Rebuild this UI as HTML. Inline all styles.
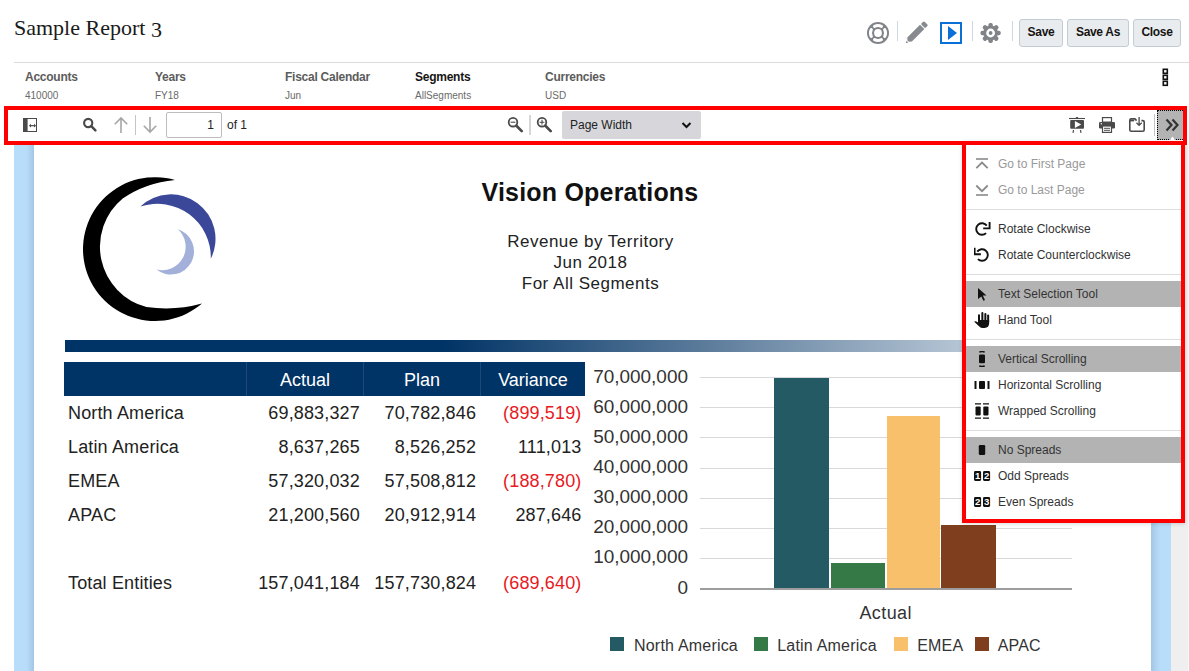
<!DOCTYPE html>
<html><head><meta charset="utf-8">
<style>
*{box-sizing:border-box;}
html,body{margin:0;padding:0;}
body{width:1189px;height:671px;overflow:hidden;position:relative;background:#fff;font-family:"Liberation Sans",sans-serif;color:#000;}
.a{position:absolute;white-space:nowrap;}
.title{left:14px;top:12.7px;font-family:"Liberation Serif",serif;font-size:22px;line-height:30px;color:#1a1a1a;}
.sep{width:1px;background:#cfd8e2;}
.btn{top:19px;height:28px;border:1px solid #c3ccd5;border-radius:3px;background:#e9ecef;font-weight:bold;font-size:12px;line-height:25px;letter-spacing:-0.3px;text-align:center;color:#161513;}
.hline{left:14px;top:62px;width:1175px;height:1px;background:#dcdcdc;}
.dl{font-weight:bold;font-size:12px;line-height:14px;letter-spacing:-0.25px;color:#5c5c5c;top:69.6px;}
.dv{font-size:10px;line-height:12px;color:#6a6a6a;top:89.5px;}
/* toolbar */
.tb{left:4px;top:106px;width:1183px;height:39px;border:4px solid #f00;background:#fff;}
.panelL{left:14px;top:145px;width:20px;height:526px;background:linear-gradient(to right,#b8ddfa 0,#b8ddfa 62%,#a4c6e6 100%);}
.panelR{left:1151px;top:145px;width:20px;height:526px;background:linear-gradient(to right,#a4c6e6 0,#b8ddfa 45%,#b8ddfa 100%);}
.gray{left:1171px;top:145px;width:18px;height:526px;background:#efefef;}
.tsep{width:1px;background:#c4c4c4;}
.menu{left:962px;top:141px;width:223px;height:382px;border:4px solid #f00;background:#fff;box-shadow:0 1px 4px rgba(0,0,0,.15);}
.mi{position:absolute;left:0;width:215px;height:26px;font-size:12px;line-height:26px;color:#333;}
.mi span{position:absolute;left:32px;top:0;}
.mi svg{position:absolute;left:8px;top:5px;}
.mi.hl{background:#b3b3b3;}
.mi.dis{color:#999;}
.msep{position:absolute;left:0;width:215px;height:1px;background:#ddd;}
.rt{font-size:17px;line-height:21.2px;letter-spacing:0.5px;color:#222;text-align:center;}
.th{position:absolute;top:361.5px;height:34px;background:#003366;}
.thc{color:#fff;font-size:18px;line-height:36px;text-align:center;}
.cell{font-size:18px;line-height:20px;letter-spacing:0.15px;color:#222;}
.neg{color:#e8191e;}
.yl{font-size:18px;line-height:20px;color:#333;text-align:right;width:100px;transform:scaleX(1.053);transform-origin:100% 50%;}
.grid{position:absolute;left:700px;width:372px;height:1px;background:#d9d9d9;}
.lg{font-size:16px;line-height:20px;letter-spacing:0.2px;color:#333;}
</style></head>
<body>
<div class="a title">Sample Report <span style="position:relative;top:2.5px">3</span></div>

<!-- header icons -->
<svg class="a" style="left:866px;top:21px" width="24" height="24" viewBox="0 0 24 24">
  <circle cx="12" cy="12" r="11" fill="#808489"/>
  <g fill="none" stroke="#fff" stroke-width="3.1" stroke-linecap="round">
    <path d="M8.6 5.3 A7.6 7.6 0 0 1 15.4 5.3"/>
    <path d="M18.7 8.6 A7.6 7.6 0 0 1 18.7 15.4"/>
    <path d="M15.4 18.7 A7.6 7.6 0 0 1 8.6 18.7"/>
    <path d="M5.3 15.4 A7.6 7.6 0 0 1 5.3 8.6"/>
  </g>
  <circle cx="12" cy="12" r="3.9" fill="#fff"/>
</svg>
<div class="a sep" style="left:897px;top:21px;height:20px"></div>
<svg class="a" style="left:904px;top:21px" width="25" height="25" viewBox="0 0 25 25">
  <g transform="translate(12.0 12.1) rotate(45) scale(0.93)" fill="#878b8f">
    <rect x="-3.3" y="-15.3" width="6.6" height="4.8" rx="1.6"/>
    <path d="M-3.3 -9.4 H3.3 V9.6 L1.2 12 H-1.2 L-3.3 9.6 Z"/>
    <path d="M-1.3 13 H1.3 L0 15.6 Z"/>
  </g>
</svg>
<div class="a" style="left:940px;top:22px;width:22px;height:22px;border:2px solid #0a6fd6;"></div>
<svg class="a" style="left:940px;top:22px" width="22" height="22" viewBox="0 0 22 22"><path d="M8 4 L17 11 L8 18 Z" fill="#0a6fd6"/></svg>
<div class="a sep" style="left:972px;top:21px;height:20px"></div>
<svg class="a" style="left:980px;top:22px" width="22" height="22" viewBox="0 0 22 22">
  <g fill="#808489">
    <circle cx="10.6" cy="11" r="7.4"/>
    <g id="teeth">
    <rect x="8.4" y="0.9" width="4.4" height="4.6" rx="1.8"/>
    <rect x="8.4" y="16.5" width="4.4" height="4.6" rx="1.8"/>
    <rect x="0.5" y="8.8" width="4.6" height="4.4" rx="1.8"/>
    <rect x="16.1" y="8.8" width="4.6" height="4.4" rx="1.8"/>
    </g>
    <g transform="rotate(45 10.6 11)">
    <rect x="8.4" y="0.9" width="4.4" height="4.6" rx="1.8"/>
    <rect x="8.4" y="16.5" width="4.4" height="4.6" rx="1.8"/>
    <rect x="0.5" y="8.8" width="4.6" height="4.4" rx="1.8"/>
    <rect x="16.1" y="8.8" width="4.6" height="4.4" rx="1.8"/>
    </g>
  </g>
  <circle cx="10.6" cy="11" r="4.4" fill="#fff"/>
  <circle cx="10.6" cy="11" r="1.9" fill="#808489"/>
</svg>
<div class="a sep" style="left:1012px;top:21px;height:20px"></div>
<div class="a btn" style="left:1019px;width:44px;">Save</div>
<div class="a btn" style="left:1067px;width:62px;">Save As</div>
<div class="a btn" style="left:1133px;width:48px;">Close</div>

<div class="a hline"></div>

<div class="a dl" style="left:25px">Accounts</div>
<div class="a dv" style="left:25px">410000</div>
<div class="a dl" style="left:155px">Years</div>
<div class="a dv" style="left:155px">FY18</div>
<div class="a dl" style="left:285px">Fiscal Calendar</div>
<div class="a dv" style="left:285px">Jun</div>
<div class="a dl" style="left:415px;color:#161513">Segments</div>
<div class="a dv" style="left:415px">AllSegments</div>
<div class="a dl" style="left:545px">Currencies</div>
<div class="a dv" style="left:545px">USD</div>
<svg class="a" style="left:1162.4px;top:68.4px" width="7" height="19" viewBox="0 0 7 19">
  <g fill="none" stroke="#111" stroke-width="1.6"><rect x="1.3" y="1.3" width="4" height="4"/><rect x="1.3" y="7.3" width="4" height="4"/><rect x="1.3" y="13.3" width="4" height="4"/></g>
</svg>

<!-- viewer -->
<div class="a gray"></div>
<div class="a" style="left:1187.5px;top:145px;width:1.5px;height:526px;background:#f8f8f8"></div>
<div class="a panelL"></div>
<div class="a panelR"></div>

<!-- report page content -->
<svg class="a" style="left:60px;top:160px" width="180" height="180" viewBox="60 160 180 180">
  <path d="M175 180 A71.94 71.94 0 1 0 202 303.5 Q175 311 146.5 307 A62.3 62.3 0 0 1 122.7 198.6 Q145 183 175 180 Z" fill="#000"/>
  <path d="M140.4 206.5 A44.53 44.53 0 0 1 210.8 258.8 A53.43 53.43 0 0 0 140.4 206.5 Z" fill="#3b4899"/>
  <path d="M177.9 229.3 A23.15 23.15 0 1 1 156.5 269.5 A23.47 23.47 0 0 0 177.9 229.3 Z" fill="#a3b1da"/>
</svg>
<div class="a" style="left:390px;top:178px;width:400px;text-align:center;font-weight:bold;font-size:25px;line-height:28px;letter-spacing:0.2px;color:#111">Vision Operations</div>
<div class="a rt" style="left:440.5px;top:230.5px;width:300px;">Revenue by Territory<br>Jun 2018<br>For All Segments</div>
<div class="a" style="left:65px;top:340px;width:1055px;height:12px;background:linear-gradient(to right,#003366 0,#003366 35.7%,#5a7a9a 60.2%,#b4c4d4 84.8%,#e8eef4 100%)"></div>

<!-- table -->
<div class="a th" style="left:64px;width:182px"></div>
<div class="a th thc" style="left:246px;width:117px;border-left:1px solid #1f4a78">Actual</div>
<div class="a th thc" style="left:363px;width:117px;border-left:1px solid #1f4a78">Plan</div>
<div class="a th thc" style="left:480px;width:105px;border-left:1px solid #1f4a78">Variance</div>

<div id="rows">
<div class="a cell" style="left:68px;top:402.6px">North America</div>
<div class="a cell" style="right:829.1px;top:402.6px">69,883,327</div>
<div class="a cell" style="right:712.9px;top:402.6px">70,782,846</div>
<div class="a cell neg" style="right:607.5px;top:402.6px">(899,519)</div>
<div class="a cell" style="left:68px;top:436.7px">Latin America</div>
<div class="a cell" style="right:829.1px;top:436.7px">8,637,265</div>
<div class="a cell" style="right:712.9px;top:436.7px">8,526,252</div>
<div class="a cell" style="right:607.5px;top:436.7px">111,013</div>
<div class="a cell" style="left:68px;top:470.8px">EMEA</div>
<div class="a cell" style="right:829.1px;top:470.8px">57,320,032</div>
<div class="a cell" style="right:712.9px;top:470.8px">57,508,812</div>
<div class="a cell neg" style="right:607.5px;top:470.8px">(188,780)</div>
<div class="a cell" style="left:68px;top:504.9px">APAC</div>
<div class="a cell" style="right:829.1px;top:504.9px">21,200,560</div>
<div class="a cell" style="right:712.9px;top:504.9px">20,912,914</div>
<div class="a cell" style="right:607.5px;top:504.9px">287,646</div>
<div class="a cell" style="left:68px;top:573.1px">Total Entities</div>
<div class="a cell" style="right:829.1px;top:573.1px">157,041,184</div>
<div class="a cell" style="right:712.9px;top:573.1px">157,730,824</div>
<div class="a cell neg" style="right:607.5px;top:573.1px">(689,640)</div>
</div>

<!-- chart -->
<div id="chart">
<div class="a yl" style="left:587.7px;top:577.5px">0</div>
<div class="grid" style="top:557.7px"></div>
<div class="a yl" style="left:587.7px;top:547.4px">10,000,000</div>
<div class="grid" style="top:527.7px"></div>
<div class="a yl" style="left:587.7px;top:517.3px">20,000,000</div>
<div class="grid" style="top:497.6px"></div>
<div class="a yl" style="left:587.7px;top:487.2px">30,000,000</div>
<div class="grid" style="top:467.5px"></div>
<div class="a yl" style="left:587.7px;top:457.2px">40,000,000</div>
<div class="grid" style="top:437.4px"></div>
<div class="a yl" style="left:587.7px;top:427.1px">50,000,000</div>
<div class="grid" style="top:407.4px"></div>
<div class="a yl" style="left:587.7px;top:397.0px">60,000,000</div>
<div class="grid" style="top:377.3px"></div>
<div class="a yl" style="left:587.7px;top:367.0px">70,000,000</div>
<div class="a" style="left:774.4px;top:378.4px;width:54.8px;height:210.1px;background:#245a63"></div>
<div class="a" style="left:830.5px;top:562.5px;width:54.6px;height:26.0px;background:#357a46"></div>
<div class="a" style="left:886.7px;top:416.1px;width:53.6px;height:172.4px;background:#f8c06a"></div>
<div class="a" style="left:941.4px;top:524.7px;width:54.6px;height:63.8px;background:#7f3f1f"></div>
<div class="a" style="left:700px;top:588.2px;width:372px;height:1.6px;background:#9d9d9d"></div>
<div class="a" style="left:785.7px;top:602.5px;width:200px;text-align:center;font-size:18px;line-height:20px;letter-spacing:0.4px;color:#333">Actual</div>
<div class="a" style="left:610.4px;top:637px;width:14px;height:14px;background:#245a63"></div>
<div class="a lg" style="left:634.0px;top:636.3px">North America</div>
<div class="a" style="left:754px;top:637px;width:14px;height:14px;background:#357a46"></div>
<div class="a lg" style="left:777.2px;top:636.3px">Latin America</div>
<div class="a" style="left:894px;top:637px;width:14px;height:14px;background:#f8c06a"></div>
<div class="a lg" style="left:917.2px;top:636.3px">EMEA</div>
<div class="a" style="left:974.5px;top:637px;width:14px;height:14px;background:#7f3f1f"></div>
<div class="a lg" style="left:997.7px;top:636.3px">APAC</div>
</div>

<!-- toolbar -->
<div class="a tb"></div>
<svg class="a" style="left:23px;top:118px" width="14" height="14" viewBox="0 0 14 14">
  <rect x="0.5" y="0.5" width="13" height="13" fill="#fff" stroke="#4a4a4a"/>
  <rect x="0" y="0" width="4.6" height="14" fill="#4a4a4a"/>
  <path d="M7.5 7.7 H11.5" stroke="#4a4a4a" stroke-width="1.2"/>
  <path d="M5.9 7.7 L8 5.8 V9.6 Z M13.1 7.7 L11 5.8 V9.6 Z" fill="#4a4a4a"/>
</svg>
<svg class="a" style="left:82px;top:117px" width="16" height="16" viewBox="0 0 16 16">
  <circle cx="6.2" cy="6" r="4.1" fill="none" stroke="#4a4a4a" stroke-width="2.1"/>
  <path d="M9.3 9.1 L13.4 13.3" stroke="#4a4a4a" stroke-width="2.5" stroke-linecap="round"/>
</svg>
<svg class="a" style="left:113px;top:116px" width="16" height="18" viewBox="0 0 16 18">
  <path d="M8 2 V17 M1.8 8.2 L8 2 L14.2 8.2" fill="none" stroke="#a6a6a6" stroke-width="1.6"/>
</svg>
<div class="a tsep" style="left:135px;top:115px;height:20px"></div>
<svg class="a" style="left:142px;top:116px" width="16" height="18" viewBox="0 0 16 18">
  <path d="M8 1 V16 M1.8 9.8 L8 16 L14.2 9.8" fill="none" stroke="#a6a6a6" stroke-width="1.6"/>
</svg>
<div class="a" style="left:166px;top:112px;width:56px;height:25.5px;border:1px solid #bdbdbd;border-radius:2px;font-size:12px;line-height:25px;text-align:right;padding-right:7px;color:#222">1</div>
<div class="a" style="left:227px;top:113px;font-size:12px;line-height:25px;color:#222">of 1</div>

<svg class="a" style="left:507px;top:116px" width="18" height="17" viewBox="0 0 18 17">
  <circle cx="6" cy="6.2" r="4.3" fill="none" stroke="#4a4a4a" stroke-width="1.8"/>
  <path d="M3.6 6.2 H8.4" stroke="#4a4a4a" stroke-width="1.1"/>
  <path d="M9.4 9.7 L14.7 15.1" stroke="#4a4a4a" stroke-width="2.7" stroke-linecap="round"/>
</svg>
<div class="a" style="left:529px;top:115px;width:2px;height:20px;background:#d6d6d6"></div>
<svg class="a" style="left:536px;top:116px" width="18" height="17" viewBox="0 0 18 17">
  <circle cx="6" cy="6.2" r="4.3" fill="none" stroke="#4a4a4a" stroke-width="1.8"/>
  <path d="M3.6 6.2 H8.4 M6 3.8 V8.6" stroke="#4a4a4a" stroke-width="1.1"/>
  <path d="M9.4 9.7 L14.7 15.1" stroke="#4a4a4a" stroke-width="2.7" stroke-linecap="round"/>
</svg>
<div class="a" style="left:562px;top:111px;width:139px;height:28px;background:#d7d7db;border-radius:2px;"></div>
<div class="a" style="left:570px;top:111px;font-size:12px;line-height:28px;color:#222">Page Width</div>
<svg class="a" style="left:681px;top:121px" width="11" height="9" viewBox="0 0 11 9"><path d="M1.5 2 L5.5 6 L9.5 2" fill="none" stroke="#111" stroke-width="2"/></svg>

<svg class="a" style="left:1069px;top:117px" width="16" height="16" viewBox="0 0 16 16">
  <path d="M0 1.5 H16" stroke="#4a4a4a" stroke-width="1.1"/>
  <rect x="6.8" y="0" width="2.4" height="1.5" rx="0.8" fill="#4a4a4a"/>
  <rect x="1.2" y="2.9" width="13.8" height="8.8" rx="1" fill="#4a4a4a"/>
  <path d="M5.9 3.9 L12.2 7.4 L5.9 10.9 Z" fill="#fff"/>
  <path d="M4.5 13 L4 15.8 M11.5 13 L12 15.8" stroke="#4a4a4a" stroke-width="1.2"/>
</svg>
<svg class="a" style="left:1099px;top:117px" width="16" height="16" viewBox="0 0 16 16">
  <rect x="3.5" y="0.6" width="9" height="4.5" fill="#fff" stroke="#4a4a4a" stroke-width="1.2"/>
  <rect x="0" y="5" width="16" height="6.5" rx="1.2" fill="#4a4a4a"/>
  <circle cx="2.3" cy="6.8" r="0.7" fill="#fff"/>
  <rect x="3.5" y="9" width="9" height="6.4" fill="#fff" stroke="#4a4a4a" stroke-width="1.2"/>
  <path d="M5 11.3 H11 M5 13.3 H11" stroke="#4a4a4a" stroke-width="1"/>
</svg>
<svg class="a" style="left:1129px;top:117px" width="16" height="15" viewBox="0 0 16 15">
  <path d="M7.6 3.6 L6 1.9 H2.3 Q0.8 1.9 0.8 3.4 V12.8 Q0.8 14.2 2.2 14.2 H13.8 Q15.2 14.2 15.2 12.8 V5 Q15.2 3.6 13.8 3.6 H12.4" fill="none" stroke="#4a4a4a" stroke-width="1.6" stroke-linejoin="round"/>
  <path d="M0.8 3.6 H5.2" stroke="#4a4a4a" stroke-width="1.6"/>
  <path d="M10.1 0 V8.3 M7.5 5.7 L10.1 8.4 L12.7 5.7" fill="none" stroke="#4a4a4a" stroke-width="1.3"/>
</svg>
<div class="a tsep" style="left:1154px;top:114px;height:22px"></div>
<div class="a" style="left:1157px;top:110px;width:26px;height:30px;background:#b3b3b3;border:1px dotted #000;border-right:none;"></div>
<svg class="a" style="left:1169px;top:135.5px" width="7" height="5" viewBox="0 0 7 5"><path d="M0 5 L3.5 0.5 L7 5 Z" fill="#fff"/></svg>
<svg class="a" style="left:1165px;top:118px" width="15" height="14" viewBox="0 0 15 14">
  <path d="M1.5 1.5 L6.5 7 L1.5 12.5 M7.5 1.5 L12.5 7 L7.5 12.5" fill="none" stroke="#333" stroke-width="2.2"/>
</svg>

<!-- menu -->
<div class="a menu">
  <div class="mi dis" style="top:6px"><svg width="16" height="16" viewBox="0 0 16 16"><path d="M2 3 H14" stroke="#8a8a8a" stroke-width="1.6"/><path d="M2.3 12.2 L8 6.5 L13.7 12.2" fill="none" stroke="#8a8a8a" stroke-width="1.8"/></svg><span>Go to First Page</span></div>
  <div class="mi dis" style="top:32px"><svg width="16" height="16" viewBox="0 0 16 16"><path d="M2.3 3.5 L8 9.2 L13.7 3.5" fill="none" stroke="#8a8a8a" stroke-width="1.8"/><path d="M2 13 H14" stroke="#8a8a8a" stroke-width="1.6"/></svg><span>Go to Last Page</span></div>
  <div class="msep" style="top:64px"></div>
  <div class="mi" style="top:71px"><svg width="18" height="16" viewBox="0 0 18 16"><path d="M12.1 12.1 A5.8 5.8 0 1 1 12.75 4.67" fill="none" stroke="#111" stroke-width="1.9"/><path d="M15.6 1 V7.4 H9.2" fill="none" stroke="#111" stroke-width="1.9" stroke-linejoin="miter"/></svg><span>Rotate Clockwise</span></div>
  <div class="mi" style="top:97px"><svg width="18" height="16" viewBox="0 0 18 16"><path d="M3.9 12.1 A5.8 5.8 0 1 0 3.25 4.67" fill="none" stroke="#111" stroke-width="1.9"/><path d="M0.6 0.8 V7.3 H6.9" fill="none" stroke="#111" stroke-width="1.9" stroke-linejoin="miter"/></svg><span>Rotate Counterclockwise</span></div>
  <div class="msep" style="top:129px"></div>
  <div class="mi hl" style="top:136px"><svg width="16" height="16" viewBox="0 0 16 16"><path d="M4 2 L12.5 9.5 L8.8 9.6 L11 14 L9.4 14.7 L7.3 10.4 L4 13 Z" fill="#111"/></svg><span>Text Selection Tool</span></div>
  <div class="mi" style="top:162px"><svg width="17" height="17" viewBox="0 0 17 17"><g stroke="#111" stroke-width="2" stroke-linecap="round"><path d="M5 3.2 V10"/><path d="M8.35 1.1 V9"/><path d="M11.35 1.9 V9"/><path d="M14.15 3.6 V10"/></g><path d="M4 8 H15.15 V11 Q15.15 15.9 10.5 15.9 H8.6 Q6.8 15.9 5.6 14.7 L0.5 10 Q0.2 9.4 0.9 9.2 Q2 9 4 10.6 Z" fill="#111"/></svg><span>Hand Tool</span></div>
  <div class="msep" style="top:194px"></div>
  <div class="mi hl" style="top:201px"><svg width="16" height="16" viewBox="0 0 16 16"><path d="M5.3 1 Q8 0.2 10.7 1 M5.3 15 Q8 15.8 10.7 15" fill="none" stroke="#111" stroke-width="1.4"/><rect x="5" y="3.6" width="6" height="8.6" rx="1.3" fill="#111"/></svg><span>Vertical Scrolling</span></div>
  <div class="mi" style="top:227px"><svg width="16" height="16" viewBox="0 0 16 16"><rect x="0.5" y="4" width="2" height="8" fill="#111"/><rect x="5" y="4" width="6" height="8" rx="1" fill="#111"/><rect x="13.5" y="4" width="2" height="8" fill="#111"/></svg><span>Horizontal Scrolling</span></div>
  <div class="mi" style="top:253px"><svg width="16" height="16" viewBox="0 0 16 16"><path d="M1 0.8 H7 M9 0.8 H15 M1 15.2 H7 M9 15.2 H15" stroke="#111" stroke-width="1.2"/><rect x="1.5" y="3.5" width="5.2" height="9" rx="1" fill="#111"/><rect x="9.3" y="3.5" width="5.2" height="9" rx="1" fill="#111"/></svg><span>Wrapped Scrolling</span></div>
  <div class="msep" style="top:285px"></div>
  <div class="mi hl" style="top:292px"><svg width="16" height="16" viewBox="0 0 16 16"><rect x="4.8" y="3" width="6.4" height="10" rx="1.3" fill="#111"/></svg><span>No Spreads</span></div>
  <div class="mi" style="top:318px"><svg width="17" height="16" viewBox="0 0 17 16"><rect x="0" y="3.1" width="7.1" height="9.8" rx="1.3" fill="#111"/><rect x="9" y="3.1" width="7.1" height="9.8" rx="1.3" fill="#111"/><text x="3.6" y="11.3" font-family="Liberation Sans" font-weight="bold" font-size="9.6" fill="#fff" text-anchor="middle">1</text><text x="12.6" y="11.3" font-family="Liberation Sans" font-weight="bold" font-size="9.6" fill="#fff" text-anchor="middle">2</text></svg><span>Odd Spreads</span></div>
  <div class="mi" style="top:344px"><svg width="17" height="16" viewBox="0 0 17 16"><rect x="0" y="3.1" width="7.1" height="9.8" rx="1.3" fill="#111"/><rect x="9" y="3.1" width="7.1" height="9.8" rx="1.3" fill="#111"/><text x="3.6" y="11.3" font-family="Liberation Sans" font-weight="bold" font-size="9.6" fill="#fff" text-anchor="middle">2</text><text x="12.6" y="11.3" font-family="Liberation Sans" font-weight="bold" font-size="9.6" fill="#fff" text-anchor="middle">3</text></svg><span>Even Spreads</span></div>
</div>
</body></html>
